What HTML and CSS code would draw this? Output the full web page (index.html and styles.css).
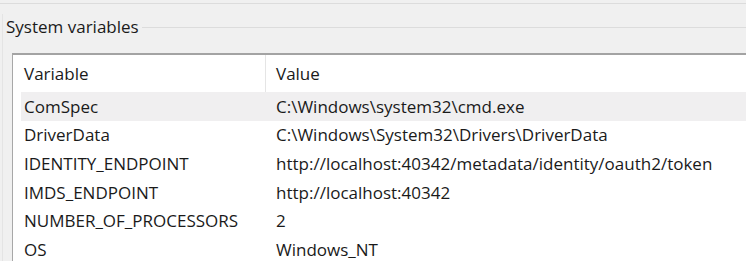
FILE: index.html
```html
<!DOCTYPE html>
<html>
<head>
<meta charset="utf-8">
<link rel="stylesheet" href="styles.css">
</head>
<body>
<div class="topline"></div>
<div class="group">
  <div class="legend"><span class="legend-text">System variables</span><span class="legend-line"></span></div>
  <div class="listbox">
    <div class="row header">
      <div class="cell name">Variable</div>
      <div class="cell value">Value</div>
    </div>
    <div class="row selected">
      <div class="cell name">ComSpec</div>
      <div class="cell value">C:\Windows\system32\cmd.exe</div>
    </div>
    <div class="row">
      <div class="cell name">DriverData</div>
      <div class="cell value">C:\Windows\System32\Drivers\DriverData</div>
    </div>
    <div class="row">
      <div class="cell name">IDENTITY_ENDPOINT</div>
      <div class="cell value">http://localhost:40342/metadata/identity/oauth2/token</div>
    </div>
    <div class="row">
      <div class="cell name">IMDS_ENDPOINT</div>
      <div class="cell value">http://localhost:40342</div>
    </div>
    <div class="row">
      <div class="cell name">NUMBER_OF_PROCESSORS</div>
      <div class="cell value">2</div>
    </div>
    <div class="row">
      <div class="cell name">OS</div>
      <div class="cell value">Windows_NT</div>
    </div>
  </div>
</div>
</body>
</html>
```

FILE: styles.css
```css
html, body {
  margin: 0;
  padding: 0;
}
body {
  background: #f0f0f0;
  font-family: "Open Sans", "Noto Sans", sans-serif;
  font-size: 17px;
  color: #1a1a1a;
  width: 746px;
  height: 261px;
  overflow: hidden;
}
.topline {
  margin-top: 3px;
  height: 1px;
  background: #dcdcdc;
}
.group {
  margin-top: 10px;
  margin-left: 2px;
  border-left: 1px solid #e4e4e4;
  display: flex;
  flex-direction: column;
}
.legend {
  display: flex;
  align-items: center;
  height: 26px;
}
.legend-text {
  padding-left: 3px;
  padding-right: 3px;
  line-height: 26px;
}
.legend-line {
  flex: 1;
  height: 1px;
  background: #dcdcdc;
}
.listbox {
  margin-top: 13px;
  margin-left: 9px;
  background: #fff;
  border-top: 2px solid #a3a3a3;
  border-left: 1px solid #a8a8a8;
  height: 206px;
  overflow: hidden;
}
.row {
  display: flex;
  height: 28.6px;
  align-items: center;
}
.row.header {
  height: 37px;
  background: #fff;
}
.row.selected {
  background: #f0eff0;
  margin-left: 8px;
}
.row.selected .name {
  width: 241px;
  padding-left: 3px;
}
.cell {
  white-space: nowrap;
}
.name {
  width: 241px;
  padding-left: 11px;
  flex: none;
}
.header .name {
  align-self: stretch;
  display: flex;
  align-items: center;
  border-right: 1px solid #e5e5e5;
  width: 241px;
}
.value {
  padding-left: 11px;
}
.header .value {
  padding-left: 10px;
}
```
